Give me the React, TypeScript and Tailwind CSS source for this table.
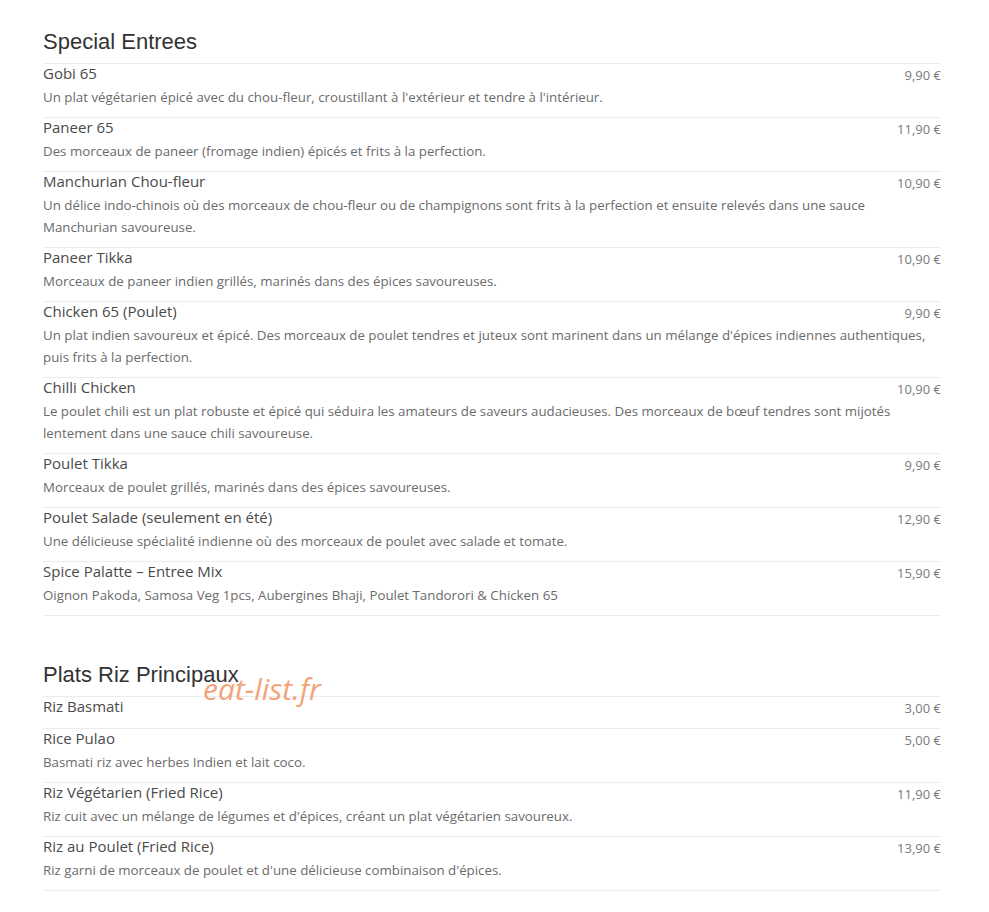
import React from "react";

type Item = { name: string; price: string; desc?: string };

const entrees: Item[] = [
  { name: "Gobi 65", price: "9,90 €", desc: "Un plat végétarien épicé avec du chou-fleur, croustillant à l'extérieur et tendre à l'intérieur." },
  { name: "Paneer 65", price: "11,90 €", desc: "Des morceaux de paneer (fromage indien) épicés et frits à la perfection." },
  { name: "Manchurian Chou-fleur", price: "10,90 €", desc: "Un délice indo-chinois où des morceaux de chou-fleur ou de champignons sont frits à la perfection et ensuite relevés dans une sauce Manchurian savoureuse." },
  { name: "Paneer Tikka", price: "10,90 €", desc: "Morceaux de paneer indien grillés, marinés dans des épices savoureuses." },
  { name: "Chicken 65 (Poulet)", price: "9,90 €", desc: "Un plat indien savoureux et épicé. Des morceaux de poulet tendres et juteux sont marinent dans un mélange d'épices indiennes authentiques, puis frits à la perfection." },
  { name: "Chilli Chicken", price: "10,90 €", desc: "Le poulet chili est un plat robuste et épicé qui séduira les amateurs de saveurs audacieuses. Des morceaux de bœuf tendres sont mijotés lentement dans une sauce chili savoureuse." },
  { name: "Poulet Tikka", price: "9,90 €", desc: "Morceaux de poulet grillés, marinés dans des épices savoureuses." },
  { name: "Poulet Salade (seulement en été)", price: "12,90 €", desc: "Une délicieuse spécialité indienne où des morceaux de poulet avec salade et tomate." },
  { name: "Spice Palatte – Entree Mix", price: "15,90 €", desc: "Oignon Pakoda, Samosa Veg 1pcs, Aubergines Bhaji, Poulet Tandorori & Chicken 65" },
];

const riz: Item[] = [
  { name: "Riz Basmati", price: "3,00 €" },
  { name: "Rice Pulao", price: "5,00 €", desc: "Basmati riz avec herbes Indien et lait coco." },
  { name: "Riz Végétarien (Fried Rice)", price: "11,90 €", desc: "Riz cuit avec un mélange de légumes et d'épices, créant un plat végétarien savoureux." },
  { name: "Riz au Poulet (Fried Rice)", price: "13,90 €", desc: "Riz garni de morceaux de poulet et d'une délicieuse combinaison d'épices." },
];

function Row({ item }: { item: Item }) {
  return (
    <div className={item.desc ? "border-t border-[#ececec] pb-[9px]" : "border-t border-[#ececec] pb-[13px]"}>
      <div className="flex h-[18px] items-start justify-between">
        <div className="text-[15px] leading-[18px] text-[#4a4a4a]">{item.name}</div>
        <div className="text-[13px] leading-[22px] text-[#7a7a7a] whitespace-nowrap">{item.price}</div>
      </div>
      {item.desc && (
        <div className="mt-[4px] pr-[4px] text-[13.3px] leading-[22px] text-[#6b6b6b]">{item.desc}</div>
      )}
    </div>
  );
}

function Section({ title, items }: { title: string; items: Item[] }) {
  return (
    <div>
      <h2 className="font-['Liberation_Sans',Arial,sans-serif] text-[22px] leading-[26px] text-[#333] pb-[8px]">{title}</h2>
      {items.map((it) => (
        <Row key={it.name} item={it} />
      ))}
      <div className="border-t border-[#ececec]" />
    </div>
  );
}

export default function App() {
  return (
    <div className="min-h-[912px] w-[989px] bg-white font-['Open_Sans',sans-serif]">
      <div className="relative ml-[43px] w-[898px] pt-[29px]">
        <Section title="Special Entrees" items={entrees} />
        <div className="h-[46px]" />
        <Section title="Plats Riz Principaux" items={riz} />
        <div className="pointer-events-none absolute left-[160px] top-[670px] font-['Open_Sans',sans-serif] text-[30px] italic leading-[38px] text-[#f29a6c] opacity-90">
          eat-list.fr
        </div>
      </div>
    </div>
  );
}
